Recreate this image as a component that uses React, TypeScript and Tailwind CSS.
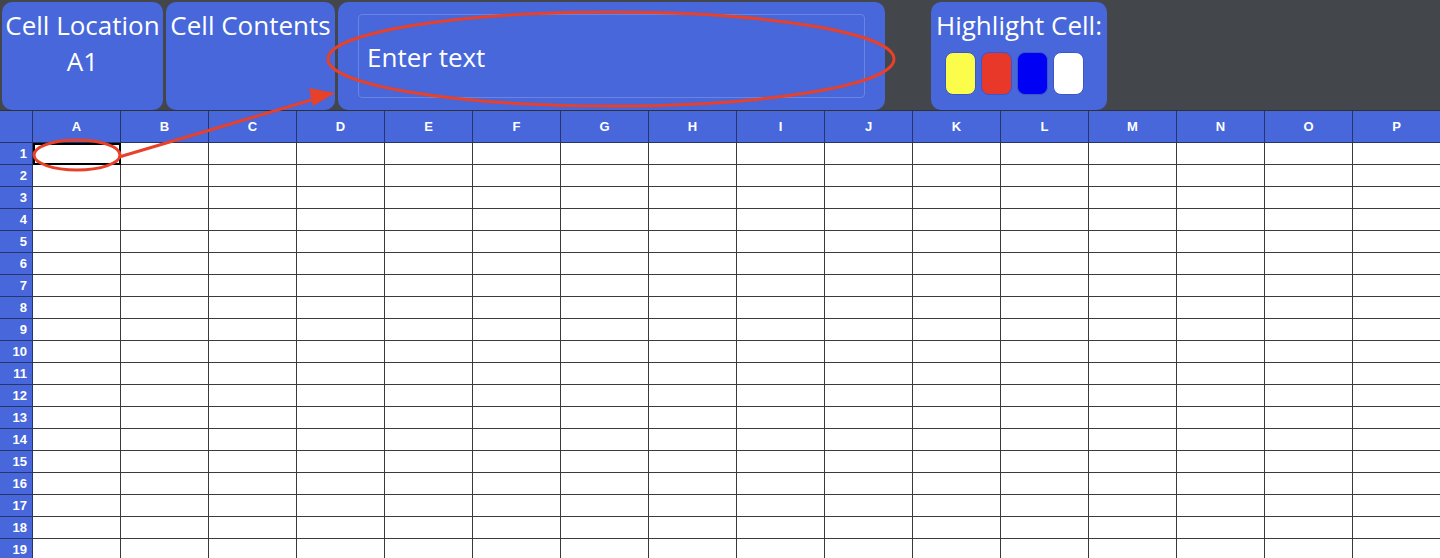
import React from "react";

const COLS = "ABCDEFGHIJKLMNOP".split("");
const ROWS = Array.from({ length: 19 }, (_, i) => i + 1);
const SWATCHES = ["bg-[#fcfc4a]", "bg-[#e8382a]", "bg-[#0000f5]", "bg-white"];

function Panel({ className, children }: { className: string; children?: React.ReactNode }) {
  return (
    <div className={`bg-[#4767da] rounded-[10px] h-[108px] flex flex-col items-center text-white ${className}`}>
      {children}
    </div>
  );
}

export default function App() {
  return (
    <div className="relative w-[1440px] h-[558px] overflow-hidden bg-white">
      <div className="h-[111px] bg-[#43464b] border-b border-[#2f3136] flex pl-[2px] pt-[2px] gap-[3px] font-['Open_Sans',sans-serif]">
        <Panel className="w-[161px]">
          <span className="text-[26px] leading-[36px] mt-[5px] whitespace-nowrap">Cell Location</span>
          <span className="text-[26px] leading-[36px]">A1</span>
        </Panel>
        <Panel className="w-[169px]">
          <span className="text-[26px] leading-[36px] mt-[5px] whitespace-nowrap">Cell Contents</span>
        </Panel>
        <Panel className="w-[547px] !items-stretch px-[20px] py-[12px]">
          <input
            placeholder="Enter text"
            className="h-full w-full bg-transparent border border-[#6a84e2] rounded-[4px] px-[8px] pt-[2px] text-[26px] text-white placeholder:text-white outline-none"
          />
        </Panel>
        <Panel className="w-[176px] ml-[43px]">
          <span className="text-[26px] leading-[36px] mt-[5px] whitespace-nowrap">Highlight Cell:</span>
          <div className="flex gap-[5px] mt-[9px] self-start ml-[14px]">
            {SWATCHES.map((c) => (
              <button key={c} className={`w-[31px] h-[43px] rounded-[8px] border border-[#3a56c8] ${c}`} />
            ))}
          </div>
        </Panel>
      </div>

      <div className="grid grid-cols-[33px_repeat(16,88px)] font-['Liberation_Sans',Arial,sans-serif] text-[13px]">
        <div className="h-[32px] bg-[#4767da] border-r border-b border-[#27336b]" />
        {COLS.map((c) => (
          <div key={c} className="h-[32px] bg-[#4767da] border-r border-b border-[#27336b] text-white font-bold flex items-center justify-center">
            {c}
          </div>
        ))}
        {ROWS.map((r) => (
          <React.Fragment key={r}>
            <div className="h-[22px] bg-[#4767da] border-r border-b border-[#27336b] text-white font-bold flex items-center justify-end pr-[5px]">
              {r}
            </div>
            {COLS.map((c) => (
              <div
                key={c + r}
                className={`h-[22px] border-r border-b border-[#3a3a3a] ${r === 1 && c === "A" ? "outline-2 outline-black -outline-offset-2" : ""}`}
              />
            ))}
          </React.Fragment>
        ))}
      </div>

      <svg className="absolute inset-0 pointer-events-none" width="1440" height="558">
        <ellipse cx="611" cy="59" rx="283" ry="47" fill="none" stroke="#e8412a" strokeWidth="3" />
        <ellipse cx="77" cy="155" rx="43" ry="15" fill="none" stroke="#e8412a" strokeWidth="3" />
        <line x1="119" y1="157" x2="318" y2="98" stroke="#e8412a" strokeWidth="3" />
        <polygon points="335,93 313,106 309,88" fill="#e8412a" />
      </svg>
    </div>
  );
}
